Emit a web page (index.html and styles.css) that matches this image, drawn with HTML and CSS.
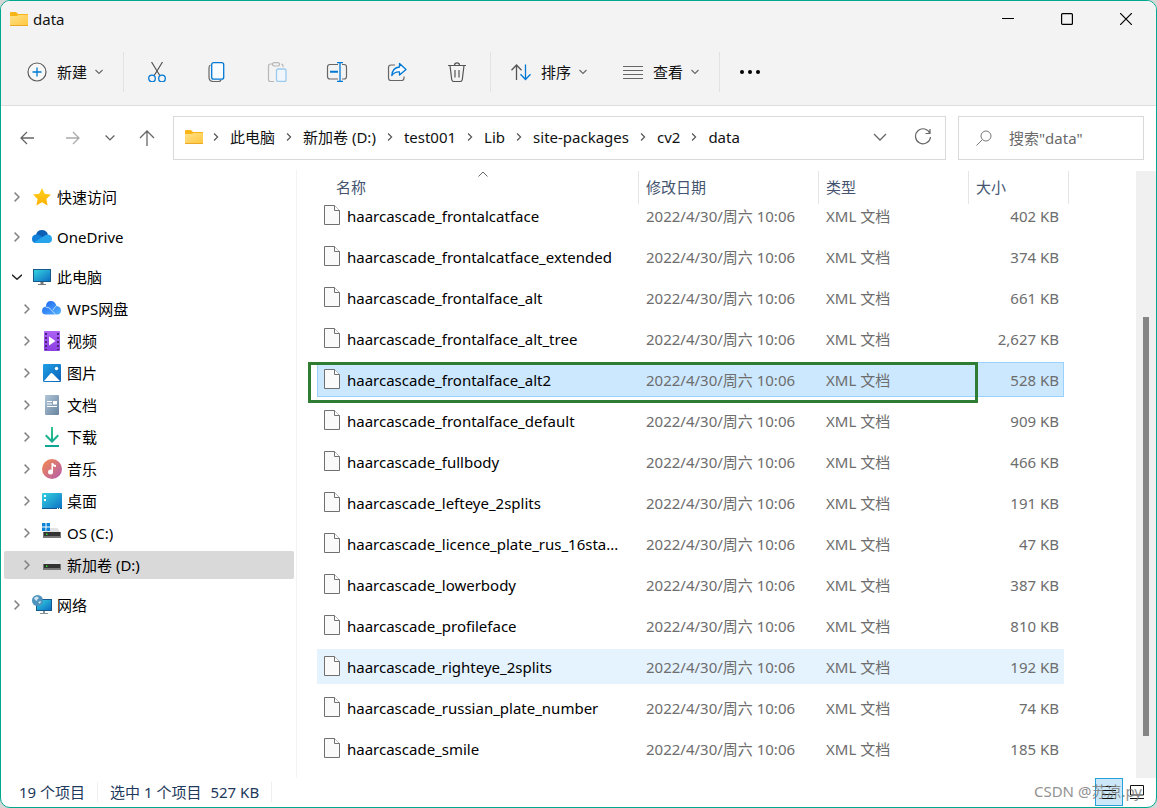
FILE: index.html
```html
<!DOCTYPE html>
<html lang="zh-CN">
<head>
<meta charset="utf-8">
<meta name="viewport" content="width=device-width, initial-scale=1">
<title>data</title>
<link rel="stylesheet" href="styles.css">
</head>
<body>
<svg class="defs" aria-hidden="true">
  <defs>
    <linearGradient id="g-folder" x1="0" y1="0" x2="1" y2="1"><stop offset="0" stop-color="#ffe08a"/><stop offset="1" stop-color="#ffc83d"/></linearGradient>
    <linearGradient id="g-screen" x1="0" y1="0" x2="1" y2="1"><stop offset="0" stop-color="#35d3e0"/><stop offset="1" stop-color="#0d6fc4"/></linearGradient>
    <linearGradient id="g-star" x1="0" y1="0" x2="0" y2="1"><stop offset="0" stop-color="#ffd21f"/><stop offset="1" stop-color="#fdb002"/></linearGradient>
    <linearGradient id="g-video" x1="0" y1="0" x2="0" y2="1"><stop offset="0" stop-color="#ad62f5"/><stop offset="1" stop-color="#8a3fe0"/></linearGradient>
    <linearGradient id="g-pic" x1="0" y1="0" x2="1" y2="1"><stop offset="0" stop-color="#1f9fe6"/><stop offset="1" stop-color="#0a62b8"/></linearGradient>
    <linearGradient id="g-doc" x1="0" y1="0" x2="1" y2="1"><stop offset="0" stop-color="#b3c6d8"/><stop offset="1" stop-color="#66839f"/></linearGradient>
    <linearGradient id="g-music" x1="0" y1="0" x2="1" y2="1"><stop offset="0" stop-color="#f58a4c"/><stop offset="1" stop-color="#b35cb0"/></linearGradient>
    <linearGradient id="g-down" x1="0" y1="0" x2="0" y2="1"><stop offset="0" stop-color="#31c48d"/><stop offset="1" stop-color="#0ea392"/></linearGradient>
    <linearGradient id="g-wps" x1="0" y1="0" x2="1" y2="1"><stop offset="0" stop-color="#1b62f0"/><stop offset="1" stop-color="#55b4ff"/></linearGradient>
    <symbol id="folder" viewBox="0 0 18 14"><path d="M0 1a1 1 0 0 1 1-1h5l2 2h10v11H0z" fill="#f9b418"/><path d="M0 4h7l1.500-1H18v10.500H0z" fill="url(#g-folder)"/><path d="M0 13h18v1H0z" fill="#eda827"/></symbol>
    <symbol id="down" viewBox="0 0 8 6"><path d="M.5 1L4 4.500 7.500 1" fill="none" stroke="currentColor" stroke-width="1.100"/></symbol>
    <symbol id="right" viewBox="0 0 6 10"><path d="M.6.6L5 5 .6 9.400" fill="none" stroke="currentColor" stroke-width="1.500"/></symbol>
    <symbol id="file" viewBox="0 0 16 20"><path d="M.5.5h10l5 5v14H.5z" fill="#fafafa" stroke="#707070"/><path d="M10.500.5v5h5" fill="#fff" stroke="#707070"/></symbol>
    <symbol id="drive" viewBox="0 0 20 20"><path d="M4.500 7h11L18 11H2z" fill="#e0e2e4"/><path d="M1 11h18v6H1z" fill="#777"/><path d="M2 11h16v4H2z" fill="#333"/><path d="M4 12.500h1.500V14H4z" fill="#2ee02e"/></symbol>
  </defs>
</svg>
<div class="window">
  <header class="titlebar">
    <svg class="folder"><use href="#folder"/></svg>
    <h1>data</h1>
    <div class="caption">
      <button type="button" aria-label="最小化"><svg width="12" height="12"><path d="M0 5.500h12" stroke="#000"/></svg></button>
      <button type="button" aria-label="最大化"><svg width="12" height="12"><rect x=".6" y=".6" width="10.800" height="10.800" rx="1" fill="none" stroke="#000" stroke-width="1.200"/></svg></button>
      <button type="button" aria-label="关闭"><svg width="12" height="12"><path d="M0 0l12 12M12 0L0 12" stroke="#000" stroke-width="1.200"/></svg></button>
    </div>
  </header>
  <div class="toolbar" role="toolbar" aria-label="命令">
    <button type="button" class="cmd"><svg class="i20" viewBox="0 0 20 20"><circle cx="10" cy="10" r="9" fill="#f8f8f8" stroke="#5a5a5a" stroke-width="1.200"/><path d="M10 5.500v9M5.500 10h9" stroke="#0078d4" stroke-width="1.300"/></svg>新建<svg class="chev"><use href="#down"/></svg></button>
    <span class="sep"></span>
    <div class="tools">
      <button type="button" aria-label="剪切"><svg class="i20" viewBox="0 0 20 20"><path d="M4.500 0l8.300 13.500M15.500 0L7.200 13.500" stroke="#555" stroke-width="1.200"/><g fill="none" stroke="#0078d4" stroke-width="1.300"><circle cx="5" cy="16.500" r="3.300"/><circle cx="15" cy="16.500" r="3.300"/></g></svg></button>
      <button type="button" aria-label="复制"><svg class="i20" viewBox="0 0 20 20"><path d="M3.500 3Q2 3.500 2 6v9q0 4.500 4.500 4.500h5q2 0 2.500-1.500" fill="none" stroke="#666" stroke-width="1.200"/><rect x="4.700" y=".7" width="12" height="16.500" rx="2" fill="#f8fbff" stroke="#0078d4" stroke-width="1.300"/></svg></button>
      <button type="button" aria-label="粘贴" disabled><svg class="i20" viewBox="0 0 20 20"><path d="M6 2H3.500Q1.500 2 1.500 4v13.500q0 2 2 2H7M14 2q2 0 2 2v1" fill="none" stroke="#b7b7b7" stroke-width="1.200"/><rect x="5.500" y=".6" width="7" height="3.400" rx="1.700" fill="none" stroke="#b7b7b7" stroke-width="1.200"/><rect x="9.500" y="7" width="9.500" height="12.500" rx="1.500" fill="#f0f6fb" stroke="#9bcaf0" stroke-width="1.300"/></svg></button>
      <button type="button" aria-label="重命名"><svg class="i22" viewBox="0 0 22 20"><path d="M12 2.500H4q-2.500 0-2.500 2.500v9.500Q1.500 17 4 17h8M16 2.500h2q2.500 0 2.500 2.500v9.500Q20.500 17 18 17h-2" fill="none" stroke="#666" stroke-width="1.200"/><path d="M11 .7h6M14 .7v18.600M11 19.300h6" fill="none" stroke="#0078d4" stroke-width="1.300"/><path d="M4 9.800h8" stroke="#0078d4" stroke-width="2"/></svg></button>
      <button type="button" aria-label="共享"><svg class="i20" viewBox="0 0 20 20"><path d="M8 3H4Q1.500 3 1.500 5.500v10.500Q1.500 18.500 4 18.500h10.500q2.500 0 2.500-2.500v-1.500" fill="none" stroke="#666" stroke-width="1.200"/><path d="M12.500 1.500l6.500 6-6.500 5.500V10Q8 9.500 4.800 13.500 5.500 5.500 12.500 5z" fill="#f8fbff" stroke="#0078d4" stroke-width="1.300" stroke-linejoin="round"/></svg></button>
      <button type="button" aria-label="删除"><svg class="i20" viewBox="0 0 20 20"><path d="M1 3.500h18M7.500 3.500Q7.500.8 10 .8t2.500 2.700M3 3.500L4.700 17.500q.3 2 2 2h6.600q1.700 0 2-2L17 3.500M8 8v7.500M12 8v7.500" fill="none" stroke="#555" stroke-width="1.200"/></svg></button>
    </div>
    <span class="sep"></span>
    <div class="cmds">
      <button type="button" class="cmd"><svg class="i20" viewBox="0 0 20 20"><path d="M5.500 18V3M.5 8.200l5-5.200 5 5.200" fill="none" stroke="#555" stroke-width="1.300"/><path d="M14.500 2.500v15M9.500 12.300l5 5.200 5-5.200" fill="none" stroke="#0078d4" stroke-width="1.300"/></svg>排序<svg class="chev"><use href="#down"/></svg></button>
      <button type="button" class="cmd"><svg class="i20" viewBox="0 0 20 20"><path d="M0 4.500h20M0 8.500h20M0 12.500h20M0 16.500h20" stroke="#666"/></svg>查看<svg class="chev"><use href="#down"/></svg></button>
    </div>
    <span class="sep"></span>
    <button type="button" class="more" aria-label="查看更多"><svg class="i20" viewBox="0 0 20 20"><circle cx="2" cy="10" r="2"/><circle cx="10" cy="10" r="2"/><circle cx="18" cy="10" r="2"/></svg></button>
  </div>
  <div class="navbar">
    <div class="history">
      <button type="button" aria-label="后退"><svg width="14" height="14"><path d="M14 7H1M7 1L1 7l6 6" fill="none" stroke="#666" stroke-width="1.300"/></svg></button>
      <button type="button" aria-label="前进"><svg width="14" height="14"><path d="M0 7h13M7 1l6 6-6 6" fill="none" stroke="#aaa" stroke-width="1.300"/></svg></button>
      <button type="button" class="recent" aria-label="最近浏览的位置"><svg class="chev"><use href="#down"/></svg></button>
      <button type="button" aria-label="向上"><svg width="16" height="16"><path d="M8 16V1M1 8l7-7 7 7" fill="none" stroke="#666" stroke-width="1.300"/></svg></button>
    </div>
    <nav class="address" aria-label="地址">
      <svg class="folder"><use href="#folder"/></svg>
      <svg class="crumb"><use href="#right"/></svg><a href="#">此电脑</a>
      <svg class="crumb"><use href="#right"/></svg><a href="#">新加卷 (D:)</a>
      <svg class="crumb"><use href="#right"/></svg><a href="#">test001</a>
      <svg class="crumb"><use href="#right"/></svg><a href="#">Lib</a>
      <svg class="crumb"><use href="#right"/></svg><a href="#">site-packages</a>
      <svg class="crumb"><use href="#right"/></svg><a href="#">cv2</a>
      <svg class="crumb"><use href="#right"/></svg><a href="#">data</a>
      <div class="address-end">
        <button type="button" aria-label="以前的位置"><svg width="14" height="8"><path d="M1 1l6 6 6-6" fill="none" stroke="#666" stroke-width="1.300"/></svg></button>
        <button type="button" aria-label="刷新"><svg width="18" height="18"><path d="M16 5.500A7.500 7.500 0 1 0 16.500 9M16 1v4.500h-4.500" fill="none" stroke="#666" stroke-width="1.200"/></svg></button>
      </div>
    </nav>
    <label class="search">
      <svg width="16" height="16"><circle cx="10" cy="6" r="5" fill="none" stroke="#777"/><path d="M6.500 9.500L.5 15.500" stroke="#777"/></svg>
      <input type="search" placeholder="搜索&quot;data&quot;" aria-label="搜索">
    </label>
  </div>
  <div class="body">
    <nav class="tree" aria-label="导航窗格">
      <a href="#"><svg class="twist"><use href="#right"/></svg><svg class="i20" viewBox="0 0 20 20"><path d="M10 1l2.700 5.800 6.300.8-4.600 4.400 1.200 6.500L10 15.300 4.400 18.500l1.200-6.500L1 7.600l6.300-.8z" fill="url(#g-star)"/></svg>快速访问</a>
      <a href="#"><svg class="twist"><use href="#right"/></svg><svg class="i20" viewBox="0 0 20 20"><path d="M4 8Q5 3 10 3q4.500 0 6 4.500L10 11z" fill="#0d5fb5"/><path d="M0 12Q0 7.500 4.500 7.500q2 0 3.500 1l7.500 5L6 16H4q-4 0-4-4z" fill="#1180d8"/><path d="M2 15.500L12 9q2-1.500 4-1.500 4 .8 4 4.500 0 4-4 4H5q-2 0-3-.5z" fill="#27a3ec"/></svg>OneDrive</a>
      <div class="group">
        <a href="#"><svg class="open" width="10" height="6"><path d="M0 .7l5 4.500 5-4.500" fill="none" stroke="#222" stroke-width="1.500"/></svg><svg class="i20" viewBox="0 0 20 20"><path d="M1 2h18v13H1z" fill="#155a8a"/><path d="M2 3h16v11H2z" fill="url(#g-screen)"/><path d="M8.500 15h3v2h-3zM6 17h8v1H6z" fill="#777"/></svg>此电脑</a>
        <a href="#" class="child"><svg class="twist"><use href="#right"/></svg><svg class="i20" viewBox="0 0 20 20"><path d="M0 12q0-4 4-4.500Q4 2 9 2q4 0 5.500 5 4.500.5 4.500 4.500 0 4-4 4H4q-4 0-4-3.500z" fill="url(#g-wps)"/><path d="M3.500 8q4 0 6 3l4 4.500M11 11q1.500-3 3.500-4" fill="none" stroke="#d8ecff" stroke-width=".8"/></svg>WPS网盘</a>
        <a href="#" class="child"><svg class="twist"><use href="#right"/></svg><svg class="i20" viewBox="0 0 20 20"><rect x="2" width="16" height="20" rx="1" fill="url(#g-video)"/><path d="M4 2v17M16 2v17" stroke="#4b2480" stroke-width="2" stroke-dasharray="2 2"/><path d="M7 5.500l6.500 4.500L7 14.500z" fill="#fff"/></svg>视频</a>
        <a href="#" class="child"><svg class="twist"><use href="#right"/></svg><svg class="i20" viewBox="0 0 20 20"><rect x="1" y="1" width="18" height="18" rx="1" fill="url(#g-pic)"/><path d="M2 18l6.500-7.500q1-1 2 0L18 18z" fill="#fff"/><circle cx="14.500" cy="5.500" r="1.700" fill="#fff"/></svg>图片</a>
        <a href="#" class="child"><svg class="twist"><use href="#right"/></svg><svg class="i20" viewBox="0 0 20 20"><rect x="3" width="14" height="20" rx="1" fill="url(#g-doc)"/><path d="M5 6.500h5M5 9h5M5 11.500h10" stroke="#fff" stroke-width="1.200"/><path d="M11 6h4v3.500h-4z" fill="#fff"/></svg>文档</a>
        <a href="#" class="child"><svg class="twist"><use href="#right"/></svg><svg class="i20" viewBox="0 0 20 20"><path d="M9 0h2v12l4.500-4.500L17 9l-7 7-7-7 1.500-1.500L9 12zM3 18h14v2H3z" fill="url(#g-down)"/></svg>下载</a>
        <a href="#" class="child"><svg class="twist"><use href="#right"/></svg><svg class="i20" viewBox="0 0 20 20"><circle cx="10" cy="10" r="10" fill="url(#g-music)"/><circle cx="8.500" cy="13" r="2.500" fill="#fff"/><path d="M9.500 4H11q.5 2 3 2v2q-2 0-3-1v6H9.500z" fill="#fff"/></svg>音乐</a>
        <a href="#" class="child"><svg class="twist"><use href="#right"/></svg><svg class="i20" viewBox="0 0 20 20"><rect y="2" width="20" height="16" rx="1" fill="url(#g-screen)"/><path d="M2 4h2v2H2zM2 8h2v2H2z" fill="#fff"/><path d="M0 17h20v1H0z" fill="#14568c"/><path d="M15 17h1v1h-1zM17 17h1v1h-1z" fill="#fff"/></svg>桌面</a>
        <a href="#" class="child"><svg class="twist"><use href="#right"/></svg><svg class="i20" viewBox="0 0 20 20"><use href="#drive" y="-2" width="20" height="20"/><path d="M0 0h3.500v3.500H0zM4.500 0H8v3.500H4.500zM0 4.500h3.500V8H0zM4.500 4.500H8V8H4.500z" fill="#0a84d8"/></svg>OS (C:)</a>
        <a href="#" class="child current" aria-current="page"><svg class="twist"><use href="#right"/></svg><svg class="i20" viewBox="0 0 20 20"><use href="#drive" y="-2" width="20" height="20"/></svg>新加卷 (D:)</a>
      </div>
      <a href="#"><svg class="twist"><use href="#right"/></svg><svg class="i20" viewBox="0 0 20 20"><path d="M4 4h16v12H4z" fill="#155a8a"/><path d="M5 5h14v10H5z" fill="url(#g-screen)"/><path d="M11 16h2v2h3v1H8v-1h3z" fill="#8a949c"/><circle cx="5.500" cy="5.500" r="5.500" fill="#4f93bd"/><path d="M2 3q3-3 5 0-2 1-2 3Q3 6 2 3zM6 7l3-1-1 3z" fill="#cfe6f2"/></svg>网络</a>
    </nav>
    <main class="files">
      <table>
        <thead>
          <tr><th scope="col" class="sorted">名称<svg class="sort" width="10" height="6"><path d="M.5 5.500L5 1l4.500 4.500" fill="none" stroke="#666"/></svg></th><th scope="col">修改日期</th><th scope="col">类型</th><th scope="col">大小</th></tr>
        </thead>
        <tbody>
          <tr><td><svg class="file"><use href="#file"/></svg>haarcascade_frontalcatface</td><td>2022/4/30/周六 10:06</td><td>XML 文档</td><td>402 KB</td></tr>
          <tr><td><svg class="file"><use href="#file"/></svg>haarcascade_frontalcatface_extended</td><td>2022/4/30/周六 10:06</td><td>XML 文档</td><td>374 KB</td></tr>
          <tr><td><svg class="file"><use href="#file"/></svg>haarcascade_frontalface_alt</td><td>2022/4/30/周六 10:06</td><td>XML 文档</td><td>661 KB</td></tr>
          <tr><td><svg class="file"><use href="#file"/></svg>haarcascade_frontalface_alt_tree</td><td>2022/4/30/周六 10:06</td><td>XML 文档</td><td>2,627 KB</td></tr>
          <tr class="selected"><td><svg class="file"><use href="#file"/></svg>haarcascade_frontalface_alt2</td><td>2022/4/30/周六 10:06</td><td>XML 文档</td><td>528 KB</td></tr>
          <tr><td><svg class="file"><use href="#file"/></svg>haarcascade_frontalface_default</td><td>2022/4/30/周六 10:06</td><td>XML 文档</td><td>909 KB</td></tr>
          <tr><td><svg class="file"><use href="#file"/></svg>haarcascade_fullbody</td><td>2022/4/30/周六 10:06</td><td>XML 文档</td><td>466 KB</td></tr>
          <tr><td><svg class="file"><use href="#file"/></svg>haarcascade_lefteye_2splits</td><td>2022/4/30/周六 10:06</td><td>XML 文档</td><td>191 KB</td></tr>
          <tr><td><svg class="file"><use href="#file"/></svg>haarcascade_licence_plate_rus_16sta...</td><td>2022/4/30/周六 10:06</td><td>XML 文档</td><td>47 KB</td></tr>
          <tr><td><svg class="file"><use href="#file"/></svg>haarcascade_lowerbody</td><td>2022/4/30/周六 10:06</td><td>XML 文档</td><td>387 KB</td></tr>
          <tr><td><svg class="file"><use href="#file"/></svg>haarcascade_profileface</td><td>2022/4/30/周六 10:06</td><td>XML 文档</td><td>810 KB</td></tr>
          <tr class="hovered"><td><svg class="file"><use href="#file"/></svg>haarcascade_righteye_2splits</td><td>2022/4/30/周六 10:06</td><td>XML 文档</td><td>192 KB</td></tr>
          <tr><td><svg class="file"><use href="#file"/></svg>haarcascade_russian_plate_number</td><td>2022/4/30/周六 10:06</td><td>XML 文档</td><td>74 KB</td></tr>
          <tr><td><svg class="file"><use href="#file"/></svg>haarcascade_smile</td><td>2022/4/30/周六 10:06</td><td>XML 文档</td><td>185 KB</td></tr>
        </tbody>
      </table>
    </main>
    <div class="scrollbar"><div class="thumb"></div></div>
  </div>
  <footer class="status">
    <span class="count">19 个项目</span>
    <span class="picked">选中 1 个项目</span>
    <span class="bytes">527 KB</span>
    <div class="views">
      <button type="button" class="on" aria-label="详细信息"><svg width="14" height="14"><path d="M0 1.500h14M0 5.500h14M0 9.500h14M0 13.500h14" stroke="#111"/></svg></button>
      <button type="button" aria-label="大缩略图"><svg width="14" height="14"><path d="M.5.5h13v9.500H.5zM0 13.500h14" fill="none" stroke="#111"/></svg></button>
      <span class="watermark">CSDN @苏凉.py</span>
    </div>
  </footer>
</div>
</body>
</html>
```
FILE: styles.css
```css
*, *::after { box-sizing: border-box; }
body {
  margin: 0;
  background: #d6d6d6;
  color: #111;
  font: 15px/20px "Noto Sans", "Noto Sans CJK SC", sans-serif;
}
button, input { font: inherit; color: inherit; border: 0; background: none; padding: 0; }
button { display: flex; align-items: center; justify-content: center; }
a { color: inherit; text-decoration: none; }
svg { display: block; flex: none; }
.defs { position: absolute; width: 0; height: 0; }
.i20 { width: 20px; height: 20px; }
.i22 { width: 22px; height: 20px; }
.folder { width: 18px; height: 14px; }
.chev { width: 8px; height: 6px; color: #666; }

.window {
  display: flex;
  flex-direction: column;
  height: 100vh;
  border: 1px solid #00a88f;
  border-radius: 10px;
  overflow: hidden;
  background: #fff;
}

.titlebar { display: flex; align-items: center; gap: 5px; height: 37px; padding: 0 1px 2px 9px; background: #f3f3f3; }
.titlebar h1 { margin: 0; font-size: 15px; font-weight: 400; }
.caption { display: flex; margin-left: auto; }
.caption button { width: 59px; height: 34px; }

.toolbar { display: flex; align-items: center; height: 68px; padding-left: 15px; background: #f3f3f3; border-bottom: 1px solid #dedede; }
.cmd { gap: 10px; height: 40px; padding: 0 11px; white-space: nowrap; }
.cmd .chev { margin-left: -2px; }
.sep { width: 1px; height: 40px; margin: 0 9px; background: #e2e2e2; }
.tools { display: flex; gap: 12px; }
.tools button { width: 48px; height: 40px; }
.cmds { display: flex; gap: 14px; }
.more { width: 42px; height: 40px; }

.navbar { display: flex; align-items: center; height: 64px; padding: 0 12px 0 3px; }
.history { display: flex; margin-right: 3px; }
.history button { width: 46px; height: 40px; }
.history .recent { width: 28px; }
.recent .chev { width: 10px; height: 8px; }
.address { display: flex; flex: 1; align-items: center; gap: 10px; min-width: 0; height: 44px; padding: 0 11px 2px; border: 1px solid #d9d9d9; white-space: nowrap; }
.address a { padding: 0 1px; }
.crumb { width: 6px; height: 8px; color: #555; }
.address-end { display: flex; margin-left: auto; }
.address-end button { width: 43px; height: 40px; }
.address-end button:last-child { margin-right: -10px; }
.search { display: flex; align-items: center; gap: 17px; width: 186px; height: 44px; margin-left: 12px; padding: 0 17px; border: 1px solid #d9d9d9; }
.search input { flex: 1; min-width: 0; }
.search input::placeholder { color: #6a6a6a; opacity: 1; }

.body { display: flex; flex: 1; min-height: 0; }
.tree { display: flex; flex-direction: column; gap: 12px; width: 296px; padding: 13px 2px 0 3px; border-right: 1px solid #f3f3f3; color: #000; }
.group { display: flex; flex-direction: column; gap: 4px; }
.tree a { display: flex; align-items: center; height: 28px; padding-left: 10px; border-radius: 2px; white-space: nowrap; }
.tree a.child { padding-left: 20px; }
.tree a.current { background: #d9d9d9; }
.tree .i20 { margin-right: 5px; }
.twist { width: 6px; height: 10px; margin-right: 12px; color: #858585; }
.open { margin: 0 10px 0 -2px; }

.files { flex: 1; min-width: 0; padding: 1px 0 0 20px; overflow: hidden; }
table, thead, tbody { display: block; }
tr { display: grid; grid-template-columns: 321px 180px 150px 96px; width: 747px; }
thead tr { grid-template-columns: 322px 180px 150px 100px; width: 752px; }
th { position: relative; height: 33px; padding: 6px 7px 0; border-right: 1px solid #e5e5e5; color: #44546f; font-weight: 400; text-align: left; }
th.sorted { padding-left: 19px; }
.sort { position: absolute; top: 0; left: 50%; }
tbody { display: flex; flex-direction: column; gap: 6px; margin-top: -6px; }
tbody tr { position: relative; align-items: center; height: 35px; }
td { padding: 0 0 0 8px; color: #6d6d6d; white-space: nowrap; }
td:first-child { display: flex; align-items: center; gap: 7px; padding-left: 7px; color: #000; }
td:last-child { padding: 0 5px 0 0; text-align: right; }
.file { width: 16px; height: 20px; margin-bottom: 2px; }
.hovered { background: #e5f3ff; }
.selected { background: #cce8ff; box-shadow: inset 0 0 0 1px #99d1ff; }
.selected::after { content: ""; position: absolute; top: 0; left: -9px; width: 670px; height: 41px; border: 3px solid #2e7d32; }

.scrollbar { width: 20px; margin-top: 1px; padding: 146px 7px 42px; background: #f0f0f0; }
.thumb { height: 100%; background: #858585; }

.status { display: flex; align-items: center; height: 29px; padding: 0 5px 2px 18px; color: #1e395b; white-space: nowrap; }
.count { padding-right: 12px; border-right: 1px solid #f0f0f0; }
.picked { padding: 0 9px 0 12px; }
.bytes { padding-right: 12px; border-right: 1px solid #f0f0f0; }
.views { position: relative; display: flex; margin-left: auto; }
.views button { width: 28px; height: 28px; }
.views .on { border: 1px solid #26a0da; background: #cce8f8; }
.watermark { position: absolute; right: 9px; top: 3px; color: #777; opacity: .8; }
```
